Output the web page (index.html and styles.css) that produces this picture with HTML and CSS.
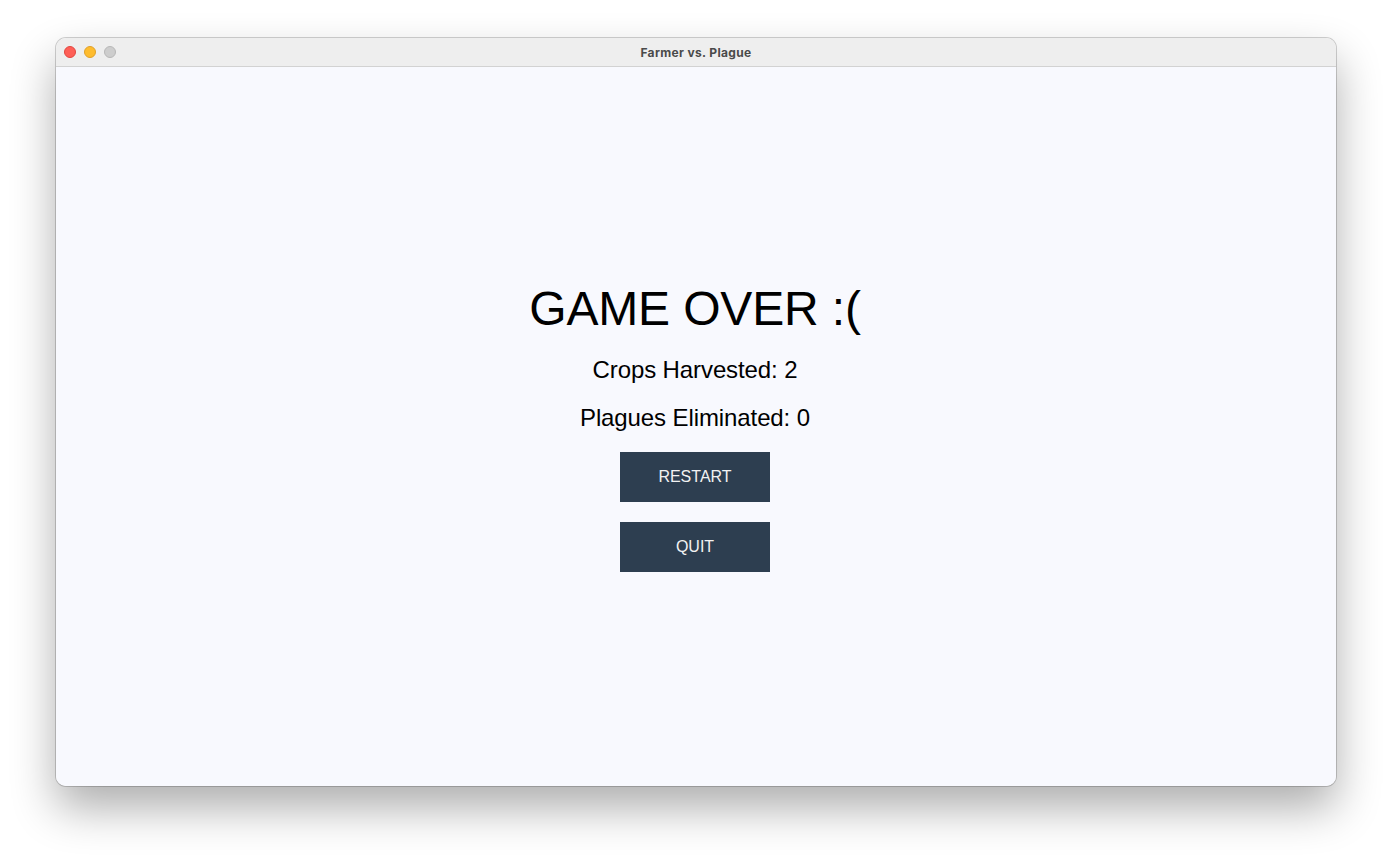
FILE: index.html
```html
<!DOCTYPE html>
<html>
<head>
<meta charset="utf-8">
<title>Farmer vs. Plague</title>
<link rel="stylesheet" href="styles.css">
</head>
<body>
<div class="window">
  <div class="titlebar">
    <div class="lights">
      <span class="light red"></span>
      <span class="light yellow"></span>
      <span class="light gray"></span>
    </div>
    <div class="title">Farmer vs. Plague</div>
  </div>
  <div class="content">
    <h1 class="heading">GAME OVER :(</h1>
    <p class="stat">Crops Harvested: 2</p>
    <p class="stat stat-last">Plagues Eliminated: 0</p>
    <button class="btn">RESTART</button>
    <button class="btn">QUIT</button>
  </div>
</div>
</body>
</html>
```
FILE: styles.css
```css
html, body {
  margin: 0;
  padding: 0;
  background: #ffffff;
}
body {
  width: 1392px;
  height: 860px;
  overflow: hidden;
}
.window {
  margin: 38px 0 0 56px;
  width: 1280px;
  height: 748px;
  border-radius: 10px;
  overflow: hidden;
  box-shadow: 0 0 0 1px rgba(0,0,0,0.18), 0 22px 45px rgba(0,0,0,0.32);
  display: flex;
  flex-direction: column;
}
.titlebar {
  height: 28px;
  background: #eeeeee;
  border-bottom: 1px solid #d2d2d2;
  position: relative;
  display: flex;
  align-items: center;
  justify-content: center;
  flex-shrink: 0;
}
.lights {
  position: absolute;
  left: 8px;
  top: 8px;
  display: flex;
  gap: 8px;
}
.light {
  width: 12px;
  height: 12px;
  border-radius: 50%;
  box-sizing: border-box;
}
.red { background: #fe5f57; border: 1px solid #e2463f; }
.yellow { background: #febc2e; border: 1px solid #e0a028; }
.gray { background: #cdcdcd; border: 1px solid #b7b7b7; }
.title {
  font-family: "Inter", "Liberation Sans", sans-serif;
  font-weight: 700;
  font-size: 12px;
  color: #4a4a4a;
  letter-spacing: 0.35px;
}
.content {
  flex: 1;
  background: #f8f9fe;
  display: flex;
  flex-direction: column;
  align-items: center;
  justify-content: center;
  padding: 0 2px 0 0;
  font-family: "Liberation Sans", Arial, sans-serif;
  color: #000000;
}
.heading {
  margin: 0 0 18px 0;
  font-size: 48px;
  font-weight: 400;
  line-height: 56px;
  letter-spacing: -0.15px;
}
.stat {
  margin: 0 0 18px 0;
  font-size: 24px;
  line-height: 30px;
  letter-spacing: -0.1px;
}
.stat-last {
  margin-bottom: 19px;
}
.btn {
  width: 150px;
  height: 50px;
  border: none;
  background: #2d3e50;
  color: #f2f2f2;
  font-family: "Liberation Sans", Arial, sans-serif;
  font-size: 16px;
  padding: 0;
  margin: 0 0 20px 0;
}
.btn:last-child {
  margin-bottom: 0;
}
```
